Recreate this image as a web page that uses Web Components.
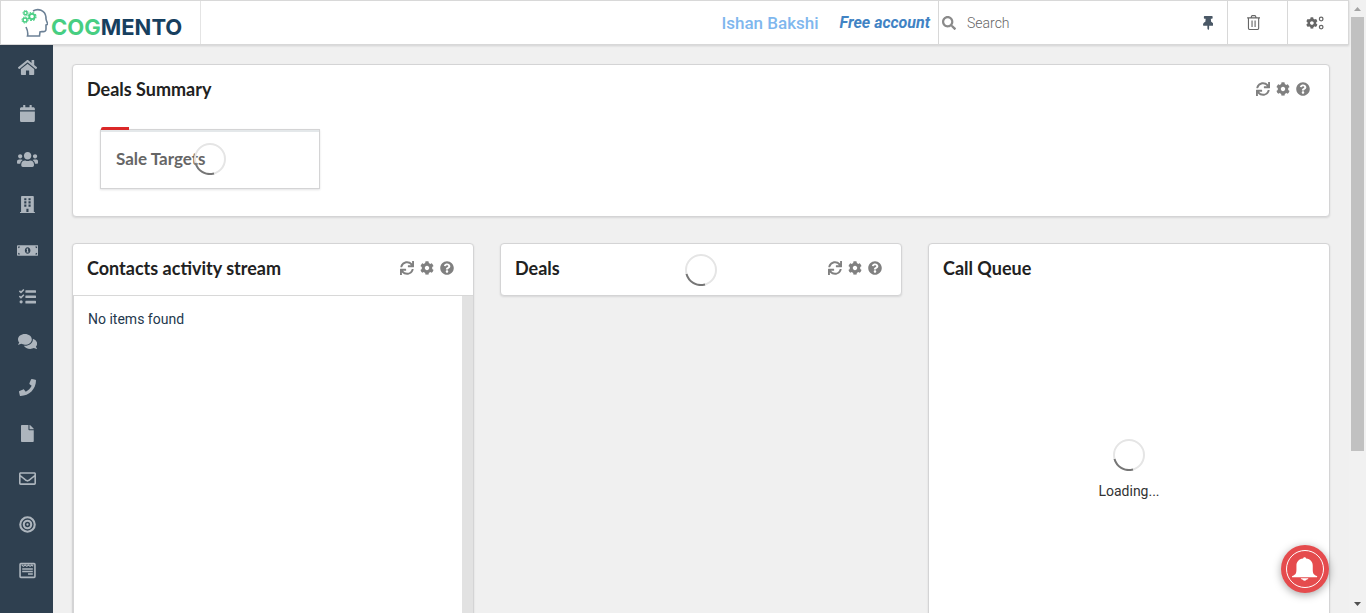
<!DOCTYPE html>
<html lang="en">
<head>
<meta charset="utf-8">
<meta name="viewport" content="width=device-width, initial-scale=1">
<title>Cogmento CRM</title>
<style>
  html, body { margin: 0; height: 100%; }
  body { font-family: Roboto, "Liberation Sans", sans-serif; font-size: 14px; color: #212529; background: #f0f0f0; overflow: hidden; }
</style>
</head>
<body>
<crm-app></crm-app>

<script>
const define = (name, html, setup) => {
  const template = document.createElement('template');
  template.innerHTML = html;
  customElements.define(name, class extends HTMLElement {
    connectedCallback() {
      if (this.shadowRoot) return;
      this.attachShadow({ mode: 'open' }).append(template.content.cloneNode(true));
      if (setup) setup(this, this.shadowRoot);
    }
  });
};

const p = d => `<path fill-rule="evenodd" d="${d}"/>`;
const COG = 'M487.4 315.7l-42.6-24.6c4.3-23.2 4.3-47 0-70.2l42.6-24.6c4.9-2.8 7.1-8.6 5.5-14-11.1-35.6-30-67.8-54.7-94.6-3.8-4.1-10-5.1-14.8-2.3L380.8 110c-17.9-15.4-38.5-27.3-60.8-35.1V25.8c0-5.6-3.9-10.5-9.4-11.7-36.7-8.2-74.3-7.8-109.2 0-5.5 1.2-9.4 6.1-9.4 11.7V75c-22.2 7.9-42.8 19.8-60.8 35.1L88.7 85.5c-4.9-2.8-11-1.9-14.8 2.3-24.7 26.7-43.6 58.9-54.7 94.6-1.7 5.4.6 11.2 5.5 14L67.3 221c-4.3 23.2-4.3 47 0 70.2l-42.6 24.6c-4.9 2.8-7.1 8.6-5.5 14 11.1 35.6 30 67.8 54.7 94.6 3.8 4.1 10 5.1 14.8 2.3l42.6-24.6c17.9 15.4 38.5 27.3 60.8 35.1v49.2c0 5.6 3.9 10.5 9.4 11.7 36.7 8.2 74.3 7.8 109.2 0 5.5-1.2 9.4-6.1 9.4-11.7v-49.2c22.2-7.9 42.8-19.8 60.8-35.1l42.6 24.6c4.9 2.8 11 1.9 14.8-2.3 24.7-26.7 43.6-58.9 54.7-94.6 1.5-5.5-.7-11.3-5.6-14.1zM256 336c-44.1 0-80-35.9-80-80s35.9-80 80-80 80 35.9 80 80-35.9 80-80 80z';

// name: [viewBox width, viewBox height, markup]
const ICONS = {
  home: [576, 512, p('M488 312.7V456c0 13.3-10.7 24-24 24H348c-6.6 0-12-5.4-12-12V356c0-6.6-5.4-12-12-12h-72c-6.6 0-12 5.4-12 12v112c0 6.6-5.4 12-12 12H112c-13.3 0-24-10.7-24-24V312.7c0-3.6 1.6-7 4.4-9.3l188-154.8c4.4-3.6 10.8-3.6 15.3 0l188 154.8c2.7 2.3 4.3 5.7 4.3 9.3zm83.6-60.9L488 182.9V44.4c0-6.6-5.4-12-12-12h-56c-6.6 0-12 5.4-12 12V117l-89.5-73.7c-17.7-14.6-43.3-14.6-61 0L4.4 251.8c-5.1 4.2-5.8 11.8-1.6 16.9l25.5 31c4.2 5.1 11.8 5.8 16.9 1.6l235.2-193.7c4.4-3.6 10.8-3.6 15.3 0l235.2 193.7c5.1 4.2 12.7 3.5 16.9-1.6l25.5-31c4.2-5.2 3.4-12.7-1.7-16.9z')],
  calendar: [448, 512, p('M12 192h424c6.6 0 12 5.4 12 12v260c0 26.5-21.5 48-48 48H48c-26.5 0-48-21.5-48-48V204c0-6.6 5.4-12 12-12zm436-44v-36c0-26.5-21.5-48-48-48h-48V12c0-6.6-5.4-12-12-12h-40c-6.6 0-12 5.4-12 12v52H160V12c0-6.6-5.4-12-12-12h-40c-6.6 0-12 5.4-12 12v52H48C21.5 64 0 85.5 0 112v36c0 6.6 5.4 12 12 12h424c6.6 0 12-5.4 12-12z')],
  users: [640, 512, p('M96 224c35.3 0 64-28.7 64-64s-28.7-64-64-64-64 28.7-64 64 28.7 64 64 64zm448 0c35.3 0 64-28.7 64-64s-28.7-64-64-64-64 28.7-64 64 28.7 64 64 64zm32 32h-64c-17.6 0-33.5 7.1-45.1 18.6 40.3 22.1 68.9 62 75.1 109.4h66c17.7 0 32-14.3 32-32v-32c0-35.3-28.7-64-64-64zm-256 0c61.9 0 112-50.1 112-112S381.9 32 320 32 208 82.1 208 144s50.1 112 112 112zm76.8 32h-8.3c-20.8 10-43.9 16-68.5 16s-47.6-6-68.5-16h-8.3C179.6 288 128 339.6 128 403.2V432c0 26.5 21.5 48 48 48h288c26.5 0 48-21.5 48-48v-28.8c0-63.6-51.6-115.2-115.2-115.2zm-223.7-13.4C161.5 263.1 145.6 256 128 256H64c-35.3 0-64 28.7-64 64v32c0 17.7 14.3 32 32 32h65.9c6.3-47.4 34.9-87.3 75.2-109.4z')],
  building: [448, 512, p('M436 480h-20V24c0-13-11-24-24-24H56C43 0 32 11 32 24v456H12c-7 0-12 5-12 12v20h448v-20c0-7-5-12-12-12zM128 64h64v64h-64zM256 64h64v64h-64zM128 160h64v64h-64zM256 160h64v64h-64zM128 256h64v64h-64zM256 256h64v64h-64zM192 384h64v96h-64z')],
  money: [640, 512, p('M0 120c0-13 9-22 22-22h596c13 0 22 9 22 22v272c0 13-9 22-22 22H22c-13 0-22-9-22-22zM36 136v52a52 52 0 0 0 52-52zM604 136h-52a52 52 0 0 0 52 52zM36 376h52a52 52 0 0 0-52-52zM604 376v-52a52 52 0 0 0-52 52zM320 160c-48 0-84 43-84 96s36 96 84 96 84-43 84-96-36-96-84-96zM300 196h34v88h14v30h-60v-30h14v-48h-14v-28z')],
  tasks: [512, 512, p('M208 64h288c9 0 16 7 16 16v48c0 9-7 16-16 16H208c-9 0-16-7-16-16V80c0-9 7-16 16-16zM208 224h288c9 0 16 7 16 16v48c0 9-7 16-16 16H208c-9 0-16-7-16-16v-48c0-9 7-16 16-16zM208 384h288c9 0 16 7 16 16v48c0 9-7 16-16 16H208c-9 0-16-7-16-16v-48c0-9 7-16 16-16zM139.600 35.500a12 12 0 0 0-17 0L58.900 98.800l-22.700-22.100a12 12 0 0 0-17 0L3.500 92.400a12 12 0 0 0 0 17l47.600 47.400a12.800 12.800 0 0 0 17.600 0l86.900-88.200a12 12 0 0 0 0-17zM139.600 195a12 12 0 0 0-17 0l-63.700 63.600-22.700-22.100a12 12 0 0 0-17 0L3.500 252a12 12 0 0 0 0 17l47 47a12.700 12.700 0 0 0 17.600 0l87.500-87.200a12 12 0 0 0 0-17zM64 368a48 48 0 1 0 0 96 48 48 0 0 0 0-96z')],
  comments: [576, 512, p('M416 192c0-88.4-93.1-160-208-160S0 103.6 0 192c0 34.3 14.1 65.9 38 92-13.4 30.2-35.5 54.2-35.8 54.5-2.2 2.3-2.8 5.7-1.5 8.7S4.8 352 8 352c36.6 0 66.9-12.3 88.7-25 32.2 15.7 70.3 25 111.3 25 114.9 0 208-71.6 208-160zm122 220c23.9-26 38-57.7 38-92 0-66.9-53.5-124.2-129.3-148.1.9 6.6 1.3 13.3 1.3 20.1 0 105.9-107.7 192-240 192-10.8 0-21.3-.8-31.7-1.9C207.8 439.6 281.8 480 368 480c41 0 79.1-9.2 111.3-25 21.8 12.7 52.1 25 88.7 25 3.2 0 6.100-1.900 7.300-4.800 1.300-2.900.7-6.300-1.500-8.700-.3-.3-22.400-24.200-35.800-54.500z')],
  phone: [512, 512, p('M493.4 24.6l-104-24c-11.3-2.6-22.9 3.3-27.5 13.9l-48 112c-4.200 9.800-1.400 21.300 6.900 28l60.600 49.600c-36 76.700-98.900 140.500-177.200 177.200l-49.600-60.600c-6.800-8.300-18.200-11.100-28-6.900l-112 48C3.900 366.500-2 378.100.6 389.400l24 104C27.100 504.200 36.700 512 48 512c256.100 0 464-207.500 464-464 0-11.200-7.700-20.900-18.600-23.400z')],
  file: [384, 512, p('M224 136V0H24C10.700 0 0 10.700 0 24v464c0 13.300 10.700 24 24 24h336c13.300 0 24-10.700 24-24V160H248c-13.200 0-24-10.800-24-24zm160-14.100v6.100H256V0h6.100c6.400 0 12.500 2.500 17 7l97.900 98c4.500 4.500 7 10.600 7 16.900z')],
  envelope: [512, 512, p('M464 64H48C21.500 64 0 85.500 0 112v288c0 26.500 21.500 48 48 48h416c26.500 0 48-21.500 48-48V112c0-26.500-21.500-48-48-48zm0 48v40.800c-22.400 18.300-58.200 46.700-134.600 106.500-16.800 13.200-50.200 45.100-73.400 44.700-23.200.4-56.600-31.500-73.400-44.700C106.200 199.500 70.400 171.100 48 152.800V112h416zM48 400V214.400c22.900 18.300 55.400 43.900 104.900 82.600 21.900 17.200 60.100 55.200 103.100 55 42.700.2 80.500-37.200 103.100-54.900 49.500-38.800 82-64.400 104.900-82.700V400H48z')],
  target: [512, 512, '<g fill="none" stroke="currentColor" stroke-width="64"><circle cx="256" cy="256" r="218"/><circle cx="256" cy="256" r="112"/></g><circle cx="256" cy="256" r="34"/>'],
  form: [512, 512, '<g fill="none" stroke="currentColor" stroke-width="48"><rect x="32" y="50" width="448" height="412" rx="24"/><path d="M84 92l50 40 50-40 50 40 50-40 50 40 50-40 44 36" stroke-width="34"/><path d="M96 210h320M96 284h320M272 362h144" stroke-width="42"/></g>'],
  refresh: [512, 512, p('M440.65 12.57l4 82.77A247.16 247.16 0 0 0 255.83 8C134.73 8 33.91 94.92 12.29 209.82A12 12 0 0 0 24.09 224h49.05a12 12 0 0 0 11.67-9.26 175.91 175.91 0 0 1 317-56.94l-101.46-4.86a12 12 0 0 0-12.57 12v47.41a12 12 0 0 0 12 12H500a12 12 0 0 0 12-12V12a12 12 0 0 0-12-12h-47.370a12 12 0 0 0-11.980 12.570zM255.830 432a175.610 175.610 0 0 1-146-77.800l101.800 4.870a12 12 0 0 0 12.570-12v-47.400a12 12 0 0 0-12-12H12a12 12 0 0 0-12 12V500a12 12 0 0 0 12 12h47.350a12 12 0 0 0 12-12.600l-4.150-82.570A247.170 247.170 0 0 0 255.830 504c121.110 0 221.930-86.920 243.550-201.820a12 12 0 0 0-11.800-14.180h-49.050a12 12 0 0 0-11.670 9.260A175.860 175.860 0 0 1 255.830 432z')],
  cog: [512, 512, p(COG)],
  help: [512, 512, p('M504 256c0 136.997-111.043 248-248 248S8 392.997 8 256C8 119.083 119.043 8 256 8s248 111.083 248 248zM262.655 90c-54.497 0-89.255 22.957-116.549 63.758-3.536 5.286-2.353 12.415 2.715 16.258l34.699 26.310c5.205 3.947 12.621 3.008 16.665-2.122 17.864-22.658 30.113-35.797 57.303-35.797 20.429 0 45.698 13.148 45.698 32.958 0 14.976-12.363 22.667-32.534 33.976C247.128 238.528 216 254.941 216 296v4c0 6.627 5.373 12 12 12h56c6.627 0 12-5.373 12-12v-1.333c0-28.462 83.186-29.647 83.186-106.667 0-58.002-60.165-102-116.531-102zM256 338c-25.365 0-46 20.635-46 46 0 25.364 20.635 46 46 46s46-20.636 46-46c0-25.365-20.635-46-46-46z')],
  search: [512, 512, p('M505 442.7L405.3 343c-4.5-4.5-10.6-7-17-7H372c27.6-35.3 44-79.7 44-128C416 93.1 322.9 0 208 0S0 93.1 0 208s93.1 208 208 208c48.3 0 92.700-16.400 128-44v16.300c0 6.400 2.500 12.500 7 17l99.700 99.700c9.400 9.400 24.600 9.400 33.900 0l28.300-28.300c9.400-9.400 9.400-24.600.1-34zM208 336c-70.700 0-128-57.200-128-128 0-70.700 57.200-128 128-128 70.700 0 128 57.200 128 128 0 70.700-57.200 128-128 128z')],
  pin: [384, 512, p('M298 214.300L285.800 96H328c13.300 0 24-10.700 24-24V24c0-13.300-10.700-24-24-24H56C42.700 0 32 10.700 32 24v48c0 13.300 10.700 24 24 24h42.200L86 214.300C37.500 236.800 0 277.300 0 328c0 13.300 10.700 24 24 24h136v104c0 1.200.3 2.500.8 3.600l24 48c2.900 5.900 11.400 5.900 14.300 0l24-48a8 8 0 0 0 .9-3.600V352h136c13.300 0 24-10.700 24-24 0-51.200-38-91.400-86-113.700z')],
  trash: [448, 512, '<g fill="none" stroke="currentColor" stroke-width="38"><path d="M4 100h440M50 100v348c0 26 20 46 46 46h256c26 0 46-20 46-46V100M136 96l24-62c4-8 8-12 16-12h96c8 0 12 4 16 12l24 62M172 190v220M276 190v220"/></g>'],
  settings: [660, 512, `<g transform="translate(0 40) scale(.84)">${p(COG)}</g><g fill="none" stroke="currentColor" stroke-width="46"><circle cx="555" cy="110" r="66"/><circle cx="555" cy="405" r="66"/></g>`],
  bell: [580, 512, p('M290 6c16 0 28 10 32 24 96 14 142 70 142 154v76c0 76 8 112 86 146 14 6 12 28-6 28H36c-18 0-20-22-6-28 78-34 86-70 86-146v-76c0-84 46-140 142-154 4-14 16-24 32-24zM208 454h164c-4 20-24 30-44 32-6 14-20 22-38 22s-32-8-38-22c-20-2-40-12-44-32z')],
};

define('crm-icon', `
  <style>
    :host { display: inline-flex; height: var(--icon-size, 14px); color: inherit; }
    svg { display: block; height: 100%; width: auto; fill: currentColor; }
  </style>`, (host, root) => {
    const [w, h, markup] = ICONS[host.getAttribute('name')];
    root.innerHTML += `<svg viewBox="0 0 ${w} ${h}" aria-hidden="true">${markup}</svg>`;
});

define('crm-spinner', `
  <style>
    :host { display: block; width: 32px; height: 32px; }
    svg { display: block; }
    circle { fill: none; stroke: #e5e5e5; stroke-width: 2; }
    path { fill: none; stroke: #767676; stroke-width: 2; }
  </style>
  <svg width="32" height="32" viewBox="0 0 32 32" role="progressbar" aria-label="Loading">
    <circle cx="16" cy="16" r="15"/><path d="M1.500 20A15 15 0 0 0 20 30.500"/>
  </svg>`);

define('crm-logo', `
  <style>
    :host { display: block; }
    a { display: flex; align-items: center; gap: 3px; height: 44px; padding-left: 20px; text-decoration: none; }
    svg { display: block; }
    .word { padding-top: 8px; font: 700 22px/24px Inter, "Liberation Sans", sans-serif; color: #173f5f; }
    b { font-weight: 700; color: #47ce82; }
  </style>
  <a href="#home">
    <svg width="27" height="30" viewBox="0 0 27 30" fill="none" aria-hidden="true">
      <path d="M12 3c5-3 12-1 13 6-.5 3 .5 4 2 7l-2 1v4c0 2-1 3-4 2.500l-2 .5-.5 4H6.500c1-4 0-6-1.500-9" stroke="#6c8196" stroke-width="1.600"/>
      <g stroke="#47ce82">
        <circle cx="11" cy="8.500" r="2.700" stroke-width="1.800"/><circle cx="11" cy="8.500" r="4" stroke-width="1.200" stroke-dasharray="1.800 1.340"/>
        <circle cx="4.500" cy="5" r="1.600" stroke-width="1.300"/><circle cx="4.500" cy="5" r="2.500" stroke-width="1" stroke-dasharray="1.200 .76"/>
        <circle cx="4" cy="12" r="2" stroke-width="1.500"/><circle cx="4" cy="12" r="3.100" stroke-width="1" stroke-dasharray="1.400 1.030"/>
      </g>
    </svg>
    <span class="word"><b>COG</b>MENTO</span>
  </a>`);

define('crm-topbar', `
  <style>
    :host { display: block; position: relative; z-index: 1; }
    header { display: flex; height: 43px; background: #fff; border: 1px solid #d8d8d8; box-shadow: 0 1px 2px rgba(34, 36, 38, .15); }
    crm-logo { width: 199px; border-right: 1px solid #e4e4e4; }
    .account { flex: 1; display: flex; justify-content: flex-end; align-items: center; gap: 21px; padding-right: 8px; font-weight: 500; font-size: 17px; line-height: 42px; }
    .user { color: #7fb7ee; }
    .plan { color: #4183c4; font-size: 16px; font-weight: 700; font-style: italic; text-decoration: none; }
    .search { display: flex; align-items: center; gap: 11px; box-sizing: border-box; width: 289px; padding: 0 14px 0 3px; border-left: 1px solid #d8d8d8; color: #8a8a8a; }
    label { display: flex; }
    input { flex: 1; min-width: 0; padding: 0; border: 0; outline: 0; background: none; font: 300 14px/20px Roboto, "Liberation Sans", sans-serif; color: #333; }
    input::placeholder { color: #666; opacity: 1; }
    button { display: flex; align-items: center; justify-content: center; padding: 0; border: 0; background: none; color: #666; }
    .pin { color: #4a5866; }
    .cell { box-sizing: border-box; width: 60px; border-left: 1px solid #d8d8d8; --icon-size: 14px; }
    .trash { padding-right: 8px; --icon-size: 15px; }
    .gears { padding-right: 6px; width: 61px; }
  </style>
  <header>
    <crm-logo></crm-logo>
    <div class="account"><span class="user">Ishan Bakshi</span><a class="plan" href="#plan">Free account</a></div>
    <div class="search">
      <label for="q" aria-label="Search"><crm-icon name="search"></crm-icon></label>
      <input id="q" type="text" placeholder="Search">
      <button class="pin" aria-label="Pin"><crm-icon name="pin"></crm-icon></button>
    </div>
    <button class="cell trash" aria-label="Deleted items"><crm-icon name="trash"></crm-icon></button>
    <button class="cell gears" aria-label="Settings"><crm-icon name="settings"></crm-icon></button>
  </header>`);

define('crm-sidebar', `
  <style>
    :host { display: block; background: #2f4050; }
    nav { display: flex; flex-direction: column; box-sizing: border-box; height: 100%; padding-bottom: 20px; }
    a { flex: 1; display: flex; align-items: center; justify-content: center; padding-left: 2px; color: #adb5bd; --icon-size: 17px; }
  </style>
  <nav></nav>`, (host, root) => {
    const links = [['home', 'Home'], ['calendar', 'Calendar'], ['users', 'Contacts'], ['building', 'Companies'], ['money', 'Deals'], ['tasks', 'Tasks'],
      ['comments', 'Cases'], ['phone', 'Calls'], ['file', 'Documents'], ['envelope', 'Email'], ['target', 'Campaigns'], ['form', 'Forms']];
    root.querySelector('nav').innerHTML = links.map(([icon, label]) =>
      `<a href="#${label.toLowerCase()}" aria-label="${label}"><crm-icon name="${icon}"></crm-icon></a>`).join('');
});

define('crm-card', `
  <style>
    :host { display: flex; flex-direction: column; box-sizing: border-box; position: relative; background: #fff; border: 1px solid #d4d4d5; border-radius: 4px; box-shadow: 0 1px 2px rgba(34, 36, 38, .12); }
    header { display: flex; align-items: flex-start; justify-content: space-between; height: 51px; padding: 0 19px 0 14px; box-sizing: border-box; }
    h2 { margin: 0; padding-top: 12px; font: 700 18px/24px Lato, "Liberation Sans", sans-serif; color: #212121; }
    .tools { display: flex; gap: 6px; padding-top: 17px; color: #808080; }
    button { display: flex; padding: 0; border: 0; background: none; color: inherit; }
    :host([plain]) .tools { display: none; }
  </style>
  <header>
    <h2></h2>
    <div class="tools">
      <button aria-label="Refresh"><crm-icon name="refresh"></crm-icon></button>
      <button aria-label="Configure"><crm-icon name="cog"></crm-icon></button>
      <button aria-label="Help"><crm-icon name="help"></crm-icon></button>
    </div>
  </header>
  <slot></slot>`, (host, root) => {
    root.querySelector('h2').textContent = host.getAttribute('heading');
});

define('crm-target', `
  <style>
    :host { display: block; position: relative; box-sizing: border-box; width: 220px; height: 60px; background: #fff; border: 1px solid #d4d4d5; box-shadow: inset 0 2px #e4e8ea, 0 1px 2px rgba(34, 36, 38, .12); }
    h3 { margin: 0; padding: 17px 15px; font: 700 17px/24px Lato, "Liberation Sans", sans-serif; color: #666; }
    .progress { position: absolute; left: 0; top: -3px; width: 28px; height: 3px; border-radius: 2px 0 0 0; background: #db2828; }
    crm-spinner { position: absolute; left: calc(50% - 16px); top: calc(50% - 16px); }
  </style>
  <div class="progress"></div>
  <h3><slot></slot></h3>
  <crm-spinner></crm-spinner>`);

define('crm-scrollbar', `
  <style>
    :host { display: flex; flex-direction: column; align-items: center; width: 17px; background: #f1f1f1; }
    svg { display: block; flex: none; }
    .track { flex: 1; align-self: stretch; display: grid; grid-template-rows: 3fr 1fr; padding: 0 2px; }
    .thumb { background: #c1c1c1; }
  </style>
  <svg width="17" height="17" viewBox="0 0 17 17"><path d="M5 11l3.500-4 3.500 4z" fill="#a3a3a3"/></svg>
  <div class="track"><div class="thumb"></div></div>
  <svg width="17" height="17" viewBox="0 0 17 17"><path d="M5 6l3.500 4L12 6z" fill="#505050"/></svg>`);

define('crm-alert-button', `
  <style>
    :host { display: block; }
    button { display: flex; align-items: center; justify-content: center; box-sizing: border-box; width: 48px; height: 48px; padding: 5px; border: 0; border-radius: 50%; background: #e54b4d; box-shadow: 0 2px 8px rgba(0, 0, 0, .35); color: #fff; --icon-size: 24px; }
    span { display: flex; align-items: center; justify-content: center; box-sizing: border-box; width: 38px; height: 38px; border: 1px solid #fff; border-radius: 50%; }
  </style>
  <button aria-label="Notifications"><span><crm-icon name="bell"></crm-icon></span></button>`);

define('crm-app', `
  <style>
    :host { display: grid; grid-template: 45px 1fr / 53px 1fr 17px; height: 100vh; overflow: hidden; }
    crm-topbar { grid-area: 1 / 1 / 2 / 3; }
    crm-sidebar { grid-area: 2 / 1; }
    crm-scrollbar { grid-area: 1 / 3 / 3 / 4; }
    main { grid-area: 2 / 2; display: flex; flex-direction: column; gap: 26px; min-height: 0; overflow: hidden; padding: 19px 19px 0; }
    .summary { flex: none; }
    crm-target { margin: 13px 27px 27px; }
    .columns { flex: 1 0 auto; display: grid; grid-template-columns: repeat(3, 1fr); gap: 26px; margin-bottom: -10px; }
    .stream { flex: 1; display: flex; border-top: 1px solid #d8d8d8; border-left: 1px solid #d4d4d5; }
    .stream p { flex: 1; margin: 0; padding: 13px 14px; line-height: 20px; color: #24384d; }
    .gutter { width: 11px; background: #e2e2e2; }
    .deals { align-self: start; }
    .deals crm-spinner { position: absolute; left: calc(50% - 16px); top: 10px; }
    .queue { flex: 1; display: flex; flex-direction: column; align-items: center; gap: 10px; padding-top: 144px; line-height: 20px; color: #333; }
    crm-alert-button { position: fixed; right: 37px; bottom: 20px; }
  </style>
  <crm-topbar></crm-topbar>
  <crm-sidebar></crm-sidebar>
  <main>
    <crm-card class="summary" heading="Deals Summary"><crm-target>Sale Targets</crm-target></crm-card>
    <div class="columns">
      <crm-card heading="Contacts activity stream">
        <div class="stream"><p>No items found</p><div class="gutter"></div></div>
      </crm-card>
      <crm-card class="deals" heading="Deals"><crm-spinner></crm-spinner></crm-card>
      <crm-card heading="Call Queue" plain>
        <div class="queue"><crm-spinner></crm-spinner><span>Loading...</span></div>
      </crm-card>
    </div>
  </main>
  <crm-scrollbar></crm-scrollbar>
  <crm-alert-button></crm-alert-button>`);
</script>
</body>
</html>
